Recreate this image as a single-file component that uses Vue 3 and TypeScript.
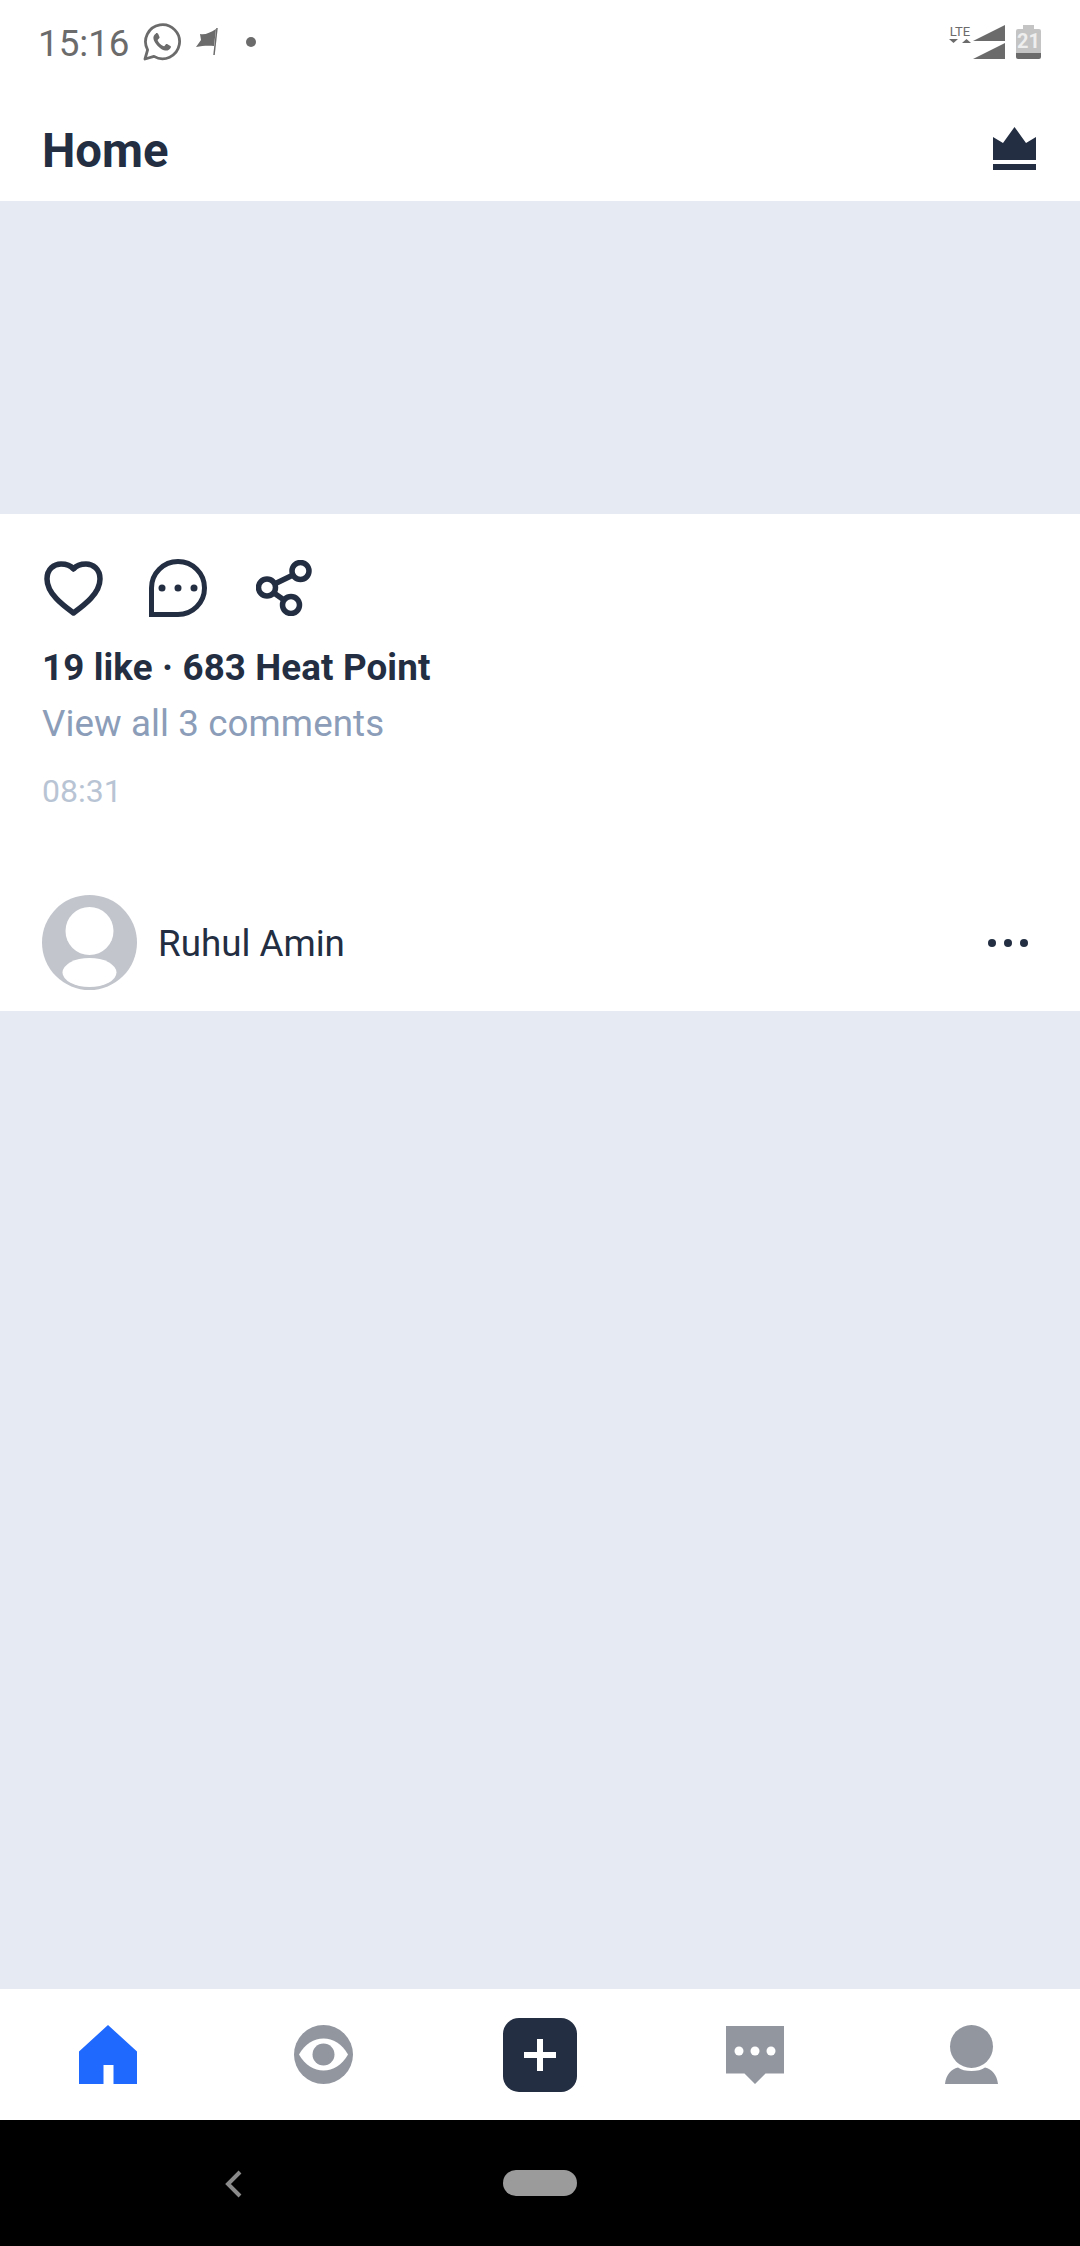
<template>
  <div class="page">
    <div class="status-bar">
      <span class="clock">15:16</span>
      <svg class="wa" width="38" height="38" viewBox="0 0 38 38">
        <path d="M2 36l2.600-9.200A17 17 0 1 1 11 33.400z" fill="none" stroke="#6b6b6b" stroke-width="2.800" stroke-linejoin="round" />
        <path d="M13 10.500c-1.800 1-3 3-2.500 5.500 1 4.500 6.500 10.500 11.500 11.500 2.500.5 4.800-.8 5.800-3 .3-.7.2-1.200-.4-1.600l-3.300-1.800c-.6-.3-1-.2-1.400.3l-1.200 1.500c-.4.4-.8.4-1.300.2-2.500-1.100-4.400-3-5.500-5.500-.2-.5-.1-.9.300-1.200l1.200-1.200c.4-.4.5-.8.300-1.300l-1.400-3.200c-.4-.8-1.200-.9-2.100-.7z" fill="#6b6b6b" />
      </svg>
      <svg class="flag" width="24" height="30" viewBox="0 0 24 30">
        <path d="M22 1l-3 27" fill="none" stroke="#6b6b6b" stroke-width="1.500" />
        <path d="M5 7c5 1 10-1 16-5l-2 17c-5-.5-11-.5-18 1l5-7z" fill="#6b6b6b" />
      </svg>
      <span class="dot"></span>
      <div class="status-right">
        <div class="lte">
          <span class="lte-text">LTE</span>
          <svg width="24" height="6" viewBox="0 0 24 6">
            <path d="M1 1h9L5.500 5zM14 5h9l-4.500-4z" fill="#6b6b6b" />
          </svg>
        </div>
        <svg class="signal" width="32" height="34" viewBox="0 0 32 34">
          <path d="M0 16L32 0v16zM0 34l32-16v16z" fill="#6b6b6b" />
        </svg>
        <div class="battery">
          <span class="battery-num">21</span>
        </div>
      </div>
    </div>

    <header class="header">
      <h1 class="title">Home</h1>
      <svg width="43" height="43" viewBox="0 0 43 43">
        <path d="M0 10l10 6L21.500 0 33 16l10-6v23H0z" fill="#232e42" />
        <rect y="37" width="43" height="6" fill="#232e42" />
      </svg>
    </header>

    <div class="media"></div>

    <section class="post">
      <div class="actions">
        <svg class="heart" width="59" height="55" viewBox="0 0 59 55">
          <path d="M29.500 52C20 45 3 33 3 18 3 8 10 3 17 3c5 0 10 2 12.500 5C32 5 37 3 42 3c7 0 14 5 14 15 0 15-17 27-26.500 34z" fill="none" stroke="#232e42" stroke-width="5.500" stroke-linejoin="round" />
        </svg>
        <svg class="chat" width="58" height="58" viewBox="0 0 58 58">
          <path d="M2.500 55.500V29a26.500 26.500 0 1 1 26.500 26.500z" fill="none" stroke="#232e42" stroke-width="5" />
          <circle cx="13" cy="29" r="3.500" fill="#232e42" />
          <circle cx="29" cy="29" r="3.500" fill="#232e42" />
          <circle cx="45" cy="29" r="3.500" fill="#232e42" />
        </svg>
        <svg class="share" width="57" height="56" viewBox="0 0 57 56">
          <g fill="none" stroke="#232e42" stroke-width="5.500">
            <circle cx="44.500" cy="11" r="8.500" />
            <circle cx="11" cy="27.500" r="8.500" />
            <circle cx="35" cy="45" r="8.500" />
            <path d="M37 15L18.500 24M18 33l10 7" />
          </g>
        </svg>
      </div>
      <div class="stats">19 like · 683 Heat Point</div>
      <div class="comments">View all 3 comments</div>
      <div class="time">08:31</div>
      <div class="author">
        <svg width="95" height="95" viewBox="0 0 95 95">
          <circle cx="47.500" cy="47.500" r="47.500" fill="#c2c5cc" />
          <circle cx="47.500" cy="36" r="24" fill="#fff" />
          <ellipse cx="47.500" cy="77.500" rx="27" ry="14.500" fill="#fff" />
        </svg>
        <span class="name">Ruhul Amin</span>
        <div class="more"><i></i><i></i><i></i></div>
      </div>
    </section>

    <div class="feed"></div>

    <nav class="tabs">
      <div class="tab">
        <svg width="58" height="59" viewBox="0 0 58 59">
          <path d="M29 0l29 26.500V59H34.500V40h-10v19H0V26.500z" fill="#1f69ff" />
        </svg>
      </div>
      <div class="tab">
        <svg width="59" height="59" viewBox="0 0 59 59">
          <circle cx="29.500" cy="29.500" r="29.500" fill="#92969f" />
          <path d="M5 29.500C11 19 20 13.500 29.500 13.500S48 19 54 29.500C48 40 39 45.500 29.500 45.500S11 40 5 29.500z" fill="#fff" />
          <circle cx="29.500" cy="29.500" r="11" fill="#92969f" />
        </svg>
      </div>
      <div class="tab">
        <div class="add">
          <svg width="32" height="32" viewBox="0 0 32 32">
            <path d="M13 0h6v13h13v6H19v13h-6V19H0v-6h13z" fill="#fff" />
          </svg>
        </div>
      </div>
      <div class="tab">
        <svg width="58" height="58" viewBox="0 0 58 58">
          <path d="M0 0h58v47.500H39.500L29 58 18.500 47.500H0z" fill="#92969f" />
          <circle cx="13" cy="25" r="4.500" fill="#fff" />
          <circle cx="29" cy="25" r="4.500" fill="#fff" />
          <circle cx="45" cy="25" r="4.500" fill="#fff" />
        </svg>
      </div>
      <div class="tab">
        <svg width="53" height="59" viewBox="0 0 53 59">
          <path d="M0 59c1-9 6-15 13-16.500 3 2.500 8 3.500 13.500 3.500S37 45 40 42.500C47 44 52 50 53 59z" fill="#92969f" />
          <circle cx="26.500" cy="21.500" r="21.500" fill="#92969f" />
        </svg>
      </div>
    </nav>

    <div class="system-nav">
      <svg class="back" width="17" height="28" viewBox="0 0 17 28">
        <path d="M15 2L3 14l12 12" fill="none" stroke="#8a8a8a" stroke-width="4" />
      </svg>
      <div class="pill"></div>
    </div>
  </div>
</template>

<script setup lang="ts">
</script>

<style>
html,
body {
  margin: 0;
  background: #fff;
}
</style>

<style scoped>
.page {
  display: flex;
  flex-direction: column;
  height: 2246px;
  font-family: Roboto, "Liberation Sans", sans-serif;
  color: #232e42;
  background: #fff;
}

.status-bar {
  display: flex;
  align-items: center;
  height: 84px;
  padding: 0 39px 0 38px;
  color: #6b6b6b;
}

.clock {
  margin-top: 4px;
  font-size: 36.75px;
  line-height: 1;
}

.wa {
  margin-left: 13px;
}

.flag {
  margin-left: 14px;
}

.dot {
  width: 10px;
  height: 10px;
  margin-left: 27px;
  border-radius: 50%;
  background: #6b6b6b;
}

.status-right {
  display: flex;
  align-items: flex-start;
  margin-left: auto;
}

.lte {
  display: flex;
  flex-direction: column;
  align-items: center;
  width: 24px;
}

.lte-text {
  font-size: 13px;
  line-height: 13px;
}

.signal {
  margin-left: 1px;
}

.battery {
  position: relative;
  width: 25px;
  height: 30px;
  margin: 4px 0 0 11px;
  border-radius: 2px;
  background: linear-gradient(#c4c4c4 24px, #6b6b6b 24px);
  text-align: center;
}

.battery::before {
  content: "";
  position: absolute;
  top: -4px;
  left: 7px;
  width: 11px;
  height: 4px;
  background: #c4c4c4;
}

.battery-num {
  display: block;
  padding-top: 2px;
  font-size: 20px;
  line-height: 20px;
  font-weight: 700;
  color: #eee;
}

.header {
  display: flex;
  align-items: center;
  justify-content: space-between;
  height: 117px;
  box-sizing: border-box;
  padding: 12px 44px 0 42px;
}

.title {
  margin: 6px 0 0;
  font-size: 47.25px;
  font-weight: 700;
  line-height: 1;
}

.media {
  height: 313px;
  background: #e6eaf3;
}

.post {
  display: flex;
  flex-direction: column;
  height: 497px;
  box-sizing: border-box;
  padding: 44px 52px 0 42px;
}

.actions {
  display: flex;
  align-items: center;
  height: 60px;
}

.heart {
  margin-left: 2px;
}

.chat {
  margin-left: 46px;
}

.share {
  margin-left: 49px;
}

.stats {
  margin-top: 28px;
  font-size: 36.75px;
  font-weight: 700;
  line-height: 44px;
  letter-spacing: 0.12px;
}

.comments {
  margin-top: 12px;
  font-size: 36.75px;
  line-height: 44px;
  letter-spacing: 0.08px;
  color: #8b9db8;
}

.time {
  margin-top: 25px;
  font-size: 32px;
  line-height: 40px;
  color: #b8c4d4;
}

.author {
  display: flex;
  align-items: center;
  margin-top: 84px;
}

.name {
  margin: 1px 0 0 21px;
  font-size: 36.75px;
}

.more {
  display: flex;
  gap: 8px;
  margin-left: auto;
}

.more i {
  width: 8px;
  height: 8px;
  border-radius: 50%;
  background: #232e42;
}

.feed {
  flex: 1;
  background: #e6eaf3;
}

.tabs {
  display: grid;
  grid-template-columns: repeat(5, 1fr);
  align-items: center;
  height: 131px;
  padding-right: 1px;
}

.tab {
  display: flex;
  justify-content: center;
  align-items: center;
}

.add {
  display: flex;
  align-items: center;
  justify-content: center;
  width: 74px;
  height: 74px;
  margin-left: 1px;
  border-radius: 16px;
  background: #232e42;
}

.system-nav {
  position: relative;
  display: flex;
  justify-content: center;
  height: 126px;
  padding-top: 50px;
  box-sizing: border-box;
  background: #000;
}

.back {
  position: absolute;
  top: 50px;
  left: 225px;
}

.pill {
  width: 74px;
  height: 26px;
  border-radius: 13px;
  background: #9b9b9b;
}
</style>
